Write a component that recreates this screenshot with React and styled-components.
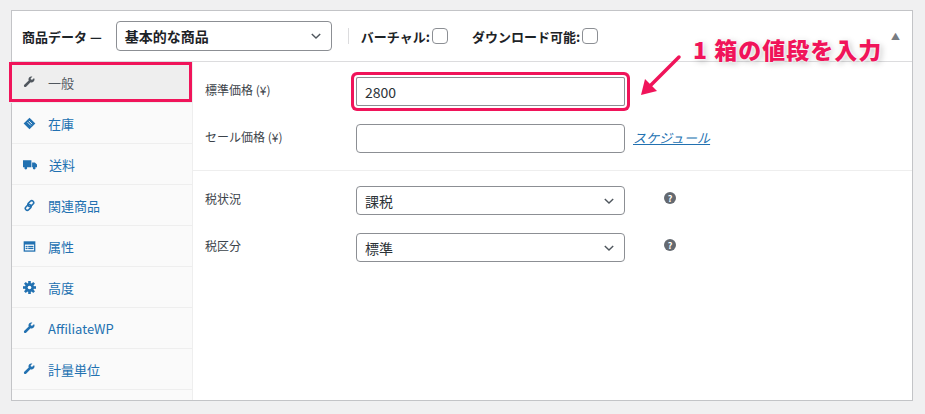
import React from 'react';
import styled, { createGlobalStyle } from 'styled-components';

const Global = createGlobalStyle`
  body { margin: 0; background: #f0f0f1; font-family: "Noto Sans CJK JP", "Noto Sans", sans-serif; }
`;

const BLUE = '#2271b1';

const Wrench = ({ c = BLUE }) => (
  <svg width="13" height="13" viewBox="0 0 20 20"><path fill={c} d="M16.7 3.3l-2.6 2.6-1.9-.4-.4-1.9 2.6-2.6C12.8.3 10.6.8 9.4 2.4c-1 1.3-1.2 3-.6 4.4L2 13.6c-.8.8-.8 2 0 2.8.8.8 2 .8 2.8 0l6.8-6.8c1.4.6 3.1.4 4.4-.6 1.6-1.2 2.1-3.4 1.5-5.1z" /></svg>
);
const Tag = () => (
  <svg width="13" height="13" viewBox="0 0 20 20"><path fill={BLUE} d="M10 1l9 9-9 9-9-9z" /><path stroke="#fff" strokeWidth="1.3" d="M7 8l5 5M9 6l5 5" /></svg>
);
const Truck = () => (
  <svg width="14" height="13" viewBox="0 0 20 16"><path fill={BLUE} d="M0 2h12v10H0zM13 5h4l3 3v4h-7z" /><circle cx="4" cy="13" r="2" fill={BLUE} /><circle cx="16" cy="13" r="2" fill={BLUE} /></svg>
);
const LinkI = () => (
  <svg width="13" height="13" viewBox="0 0 20 20" fill="none" stroke={BLUE} strokeWidth="2.4"><rect x="9" y="2" width="6" height="10" rx="3" transform="rotate(45 12 7)" /><rect x="5" y="8" width="6" height="10" rx="3" transform="rotate(45 8 13)" /></svg>
);
const Attr = () => (
  <svg width="13" height="13" viewBox="0 0 20 20"><rect x="1" y="2" width="18" height="16" fill={BLUE} /><rect x="3" y="7" width="14" height="9" fill="#fff" /><rect x="4" y="9" width="3" height="2" fill={BLUE} /><rect x="8" y="9" width="8" height="2" fill={BLUE} /><rect x="4" y="12" width="3" height="2" fill={BLUE} /><rect x="8" y="12" width="8" height="2" fill={BLUE} /></svg>
);
const Gear = () => (
  <svg width="13" height="13" viewBox="0 0 20 20"><g fill={BLUE}>{[0, 45, 90, 135].map(a => <rect key={a} x="8" y="0" width="4" height="20" transform={`rotate(${a} 10 10)`} />)}<circle cx="10" cy="10" r="7" /></g><circle cx="10" cy="10" r="2.8" fill="#fff" /></svg>
);

const Chevron = () => (
  <svg width="14" height="14" viewBox="0 0 20 20" fill="none" stroke="#50575e" strokeWidth="2"><path d="M4 7l6 6 6-6" /></svg>
);

const Panel = styled.div`
  margin: 10px 12px 14px 11px;
  background: #fff;
  border: 1px solid #c3c4c7;
  position: relative;
`;
const Header = styled.div`
  height: 50px;
  display: flex;
  align-items: center;
  padding: 0 10px;
  border-bottom: 1px solid #dcdcde;
  font-size: 13px;
  font-weight: 700;
  color: #1d2327;
`;
const TypeSelect = styled.div`
  margin-left: 14px;
  width: 216px;
  height: 30px;
  border: 1px solid #8c8f94;
  border-radius: 4px;
  display: flex;
  align-items: center;
  justify-content: space-between;
  padding: 0 8px;
  box-sizing: border-box;
  font-size: 14px;
`;
const Sep = styled.div`
  width: 1px; height: 16px; background: #dcdcde; margin: 0 12px 0 16px;
`;
const Check = styled.span`
  display: inline-block; width: 14px; height: 14px; border: 1px solid #8c8f94;
  border-radius: 4px; margin-left: 2px; margin-right: 24px; vertical-align: middle;
`;
const Toggle = styled.span`
  margin-left: auto; margin-right: 2px; font-size: 9px; color: #787c82;
`;
const Body = styled.div`
  display: flex;
`;
const Side = styled.div`
  width: 180px;
  background: #fafafa;
  border-right: 1px solid #eee;
  padding-bottom: 10px;
`;
const Tab = styled.div`
  height: 41px;
  box-sizing: border-box;
  display: flex;
  align-items: center;
  gap: 12px;
  padding-left: 11px;
  font-size: 13px;
  border-bottom: 1px solid #eee;
  color: ${p => (p.$active ? '#50575e' : BLUE)};
  background: ${p => (p.$active ? '#eee' : 'transparent')};
  ${p => p.$active && 'box-shadow: inset 0 0 0 3px #f0145a; margin-left: -3px; padding-left: 14px;'}
`;
const Main = styled.div`
  flex: 1;
`;
const Group = styled.div`
  padding: 6px 0 8px;
  border-bottom: ${p => (p.$line ? '1px solid #eee' : 'none')};
`;
const Row = styled.div`
  display: flex;
  align-items: flex-start;
  padding: 9px 12px;
  font-size: 12px;
  color: #3c434a;
`;
const Label = styled.div`
  width: 151px;
  padding-top: 4px;
`;
const Input = styled.div`
  width: 269px;
  height: 29px;
  box-sizing: border-box;
  border: 1px solid #8c8f94;
  border-radius: 4px;
  display: flex;
  align-items: center;
  justify-content: space-between;
  padding: 0 8px;
  font-size: 14px;
  color: #2c3338;
  ${p => p.$hl && 'box-shadow: 0 0 0 2px #fff, 0 0 0 5px #f0145a; border-radius: 2px;'}
`;
const Sched = styled.a`
  margin-left: 8px; margin-top: 4px; color: ${BLUE}; text-decoration: underline; font-size: 13px; font-style: italic;
`;
const Help = styled.span`
  margin-left: 39px; margin-top: 6px;
  width: 12px; height: 12px; border-radius: 50%; background: #646970; color: #fff;
  font-size: 9px; font-weight: 700; display: flex; align-items: center; justify-content: center;
`;
const Note = styled.div`
  position: absolute;
  left: 681px; top: 21px;
  font-size: 23px; font-weight: 900; color: #f0145a;
  letter-spacing: 1px;
  text-shadow: 0 0 2px #fff, 0 0 3px #fff, 2px 2px 6px rgba(0,0,0,0.25);
`;
const Arrow = styled.svg`
  position: absolute; left: 625px; top: 42px;
`;

export default function App() {
  return (
    <>
      <Global />
      <Panel>
        <Header>
          商品データ —
          <TypeSelect>基本的な商品<Chevron /></TypeSelect>
          <Sep />
          バーチャル:<Check />
          ダウンロード可能:<Check />
          <Toggle>▲</Toggle>
        </Header>
        <Body>
          <Side>
            <Tab $active><Wrench c="#50575e" />一般</Tab>
            <Tab><Tag />在庫</Tab>
            <Tab><Truck />送料</Tab>
            <Tab><LinkI />関連商品</Tab>
            <Tab><Attr />属性</Tab>
            <Tab><Gear />高度</Tab>
            <Tab><Wrench />AffiliateWP</Tab>
            <Tab><Wrench />計量単位</Tab>
          </Side>
          <Main>
            <Group $line>
              <Row><Label>標準価格 (¥)</Label><Input $hl>2800</Input></Row>
              <Row><Label>セール価格 (¥)</Label><Input /><Sched>スケジュール</Sched></Row>
            </Group>
            <Group>
              <Row><Label>税状況</Label><Input>課税<Chevron /></Input><Help>?</Help></Row>
              <Row><Label>税区分</Label><Input>標準<Chevron /></Input><Help>?</Help></Row>
            </Group>
          </Main>
        </Body>
        <Note>1 箱の値段を入力</Note>
        <Arrow width="50" height="45" viewBox="0 0 50 45">
          <path d="M42 4L12 34" stroke="#f0145a" strokeWidth="3.5" strokeLinecap="round" />
          <path d="M4 42l4-16 12 12z" fill="#f0145a" />
        </Arrow>
      </Panel>
    </>
  );
}
